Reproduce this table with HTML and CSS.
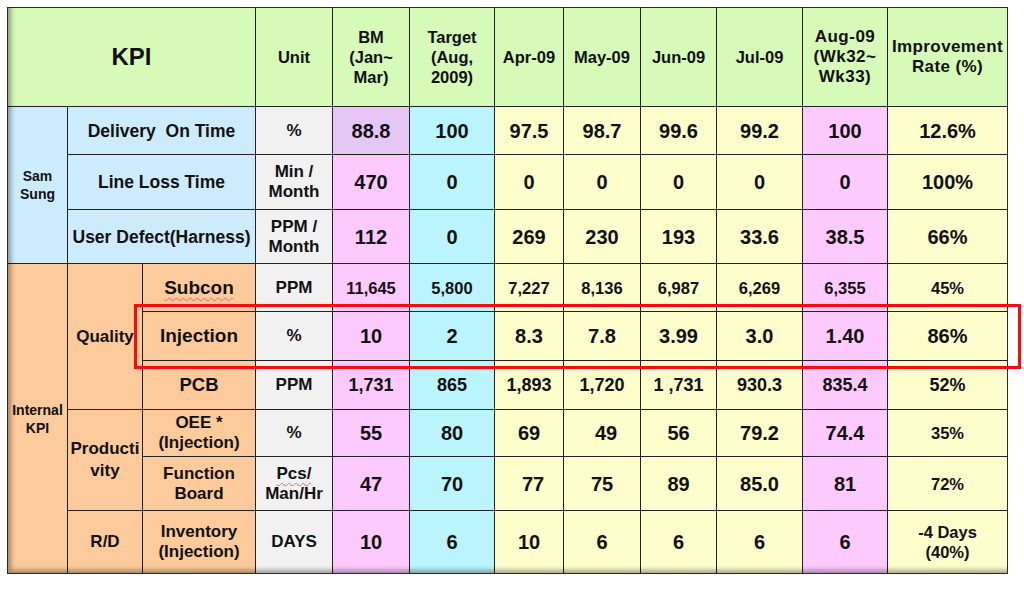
FILE: index.html
```html
<!DOCTYPE html>
<html>
<head>
<meta charset="utf-8">
<link rel="stylesheet" href="styles.css">
</head>
<body>
<div class="slide">
  <div class="kpi">
    <div class="c hd span3 title">KPI</div>
    <div class="c hd">Unit</div>
    <div class="c hd">BM<br>(Jan~<br>Mar)</div>
    <div class="c hd">Target<br>(Aug,<br>2009)</div>
    <div class="c hd">Apr-09</div>
    <div class="c hd">May-09</div>
    <div class="c hd">Jun-09</div>
    <div class="c hd">Jul-09</div>
    <div class="c hd aug">Aug-09<br>(Wk32~<br>Wk33)</div>
    <div class="c hd imp">Improvement<br>Rate (%)</div>

    <div class="c blue grp rows3">Sam<br>Sung</div>
    <div class="c blue span2 lbl">Delivery&nbsp; On Time</div>
    <div class="c unit">%</div>
    <div class="c lav v">88.8</div>
    <div class="c cyan v">100</div>
    <div class="c yel v">97.5</div>
    <div class="c yel v">98.7</div>
    <div class="c yel v">99.6</div>
    <div class="c yel v">99.2</div>
    <div class="c pink v">100</div>
    <div class="c yel v">12.6%</div>

    <div class="c blue span2 lbl">Line Loss Time</div>
    <div class="c unit">Min /<br>Month</div>
    <div class="c pink v">470</div>
    <div class="c cyan v">0</div>
    <div class="c yel v">0</div>
    <div class="c yel v">0</div>
    <div class="c yel v">0</div>
    <div class="c yel v">0</div>
    <div class="c pink v">0</div>
    <div class="c yel v">100%</div>

    <div class="c blue span2 lbl lbl-lg">User Defect(Harness)</div>
    <div class="c unit">PPM /<br>Month</div>
    <div class="c pink v">112</div>
    <div class="c cyan v">0</div>
    <div class="c yel v">269</div>
    <div class="c yel v">230</div>
    <div class="c yel v">193</div>
    <div class="c yel v">33.6</div>
    <div class="c pink v">38.5</div>
    <div class="c yel v">66%</div>

    <div class="c peach grp rows6">Internal<br>KPI</div>
    <div class="c peach sub rows3">Quality</div>
    <div class="c peach name name-lg"><span class="squig">Subcon</span></div>
    <div class="c unit">PPM</div>
    <div class="c pink s">11,645</div>
    <div class="c cyan s">5,800</div>
    <div class="c yel s">7,227</div>
    <div class="c yel s">8,136</div>
    <div class="c yel s">6,987</div>
    <div class="c yel s">6,269</div>
    <div class="c pink s">6,355</div>
    <div class="c yel s">45%</div>

    <div class="c peach name name-lg">Injection</div>
    <div class="c unit">%</div>
    <div class="c pink v">10</div>
    <div class="c cyan v">2</div>
    <div class="c yel v">8.3</div>
    <div class="c yel v">7.8</div>
    <div class="c yel v">3.99</div>
    <div class="c yel v">3.0</div>
    <div class="c pink v">1.40</div>
    <div class="c yel v">86%</div>

    <div class="c peach name name-md">PCB</div>
    <div class="c unit">PPM</div>
    <div class="c pink m">1,731</div>
    <div class="c cyan m">865</div>
    <div class="c yel m">1,893</div>
    <div class="c yel m">1,720</div>
    <div class="c yel m">1 ,731</div>
    <div class="c yel m">930.3</div>
    <div class="c pink m">835.4</div>
    <div class="c yel m">52%</div>

    <div class="c peach sub rows2">Producti<br>vity</div>
    <div class="c peach name">OEE *<br>(Injection)</div>
    <div class="c unit">%</div>
    <div class="c pink v">55</div>
    <div class="c cyan v">80</div>
    <div class="c yel v">69</div>
    <div class="c yel v nudge">49</div>
    <div class="c yel v">56</div>
    <div class="c yel v">79.2</div>
    <div class="c pink v">74.4</div>
    <div class="c yel s">35%</div>

    <div class="c peach name">Function<br>Board</div>
    <div class="c unit"><div class="txt"><span class="squig">Pcs/</span><br>Man/Hr</div></div>
    <div class="c pink v">47</div>
    <div class="c cyan v">70</div>
    <div class="c yel v nudge">77</div>
    <div class="c yel v">75</div>
    <div class="c yel v">89</div>
    <div class="c yel v">85.0</div>
    <div class="c pink v">81</div>
    <div class="c yel s">72%</div>

    <div class="c peach sub">R/D</div>
    <div class="c peach name">Inventory<br>(Injection)</div>
    <div class="c unit">DAYS</div>
    <div class="c pink v">10</div>
    <div class="c cyan v">6</div>
    <div class="c yel v">10</div>
    <div class="c yel v">6</div>
    <div class="c yel v">6</div>
    <div class="c yel v">6</div>
    <div class="c pink v">6</div>
    <div class="c yel s">-4 Days<br>(40%)</div>
  </div>
  <div class="highlight"></div>
</div>
</body>
</html>
```

FILE: styles.css
```css
html, body {
  margin: 0;
  padding: 0;
  background: #ffffff;
}

.slide {
  position: relative;
  width: 1024px;
  height: 590px;
  padding: 7px 0 0 7px;
  box-sizing: border-box;
  font-family: "Liberation Sans", Arial, sans-serif;
  font-weight: bold;
  color: #111;
}

.kpi {
  position: relative;
  display: grid;
  grid-template-columns: 59px 74px 112px 76px 76px 84px 68px 76px 75px 85px 84px 119px;
  grid-template-rows: 98px 47px 54px 53px 47px 48px 48px 46px 53px 62px;
  gap: 1px;
  width: max-content;
  background: #222;
  border: 1px solid #2a2a2a;
}

.kpi::after {
  content: "";
  position: absolute;
  inset: 0;
  pointer-events: none;
  box-shadow: inset 5px -5px 5px -2px rgba(0, 0, 0, 0.35);
}

.c {
  display: flex;
  align-items: center;
  justify-content: center;
  text-align: center;
  line-height: 20px;
  font-size: 17px;
  white-space: nowrap;
}

.txt { text-align: center; }

.span3 { grid-column: span 3; }
.span2 { grid-column: span 2; }
.rows3 { grid-row: span 3; }
.rows2 { grid-row: span 2; }
.rows6 { grid-row: span 6; }

.hd { background: #d6fab8; font-size: 16.5px; }
.title { font-size: 24px; }
.aug { font-size: 17px; letter-spacing: 0.5px; }
.imp { font-size: 17px; letter-spacing: 0.4px; }

.blue { background: #ccecfe; }
.peach { background: #fdcb9b; }
.unit { background: #f1f1f1; font-size: 17px; }
.lav { background: #e6c6f5; }
.pink { background: #fdcafd; }
.cyan { background: #baf4fc; }
.yel { background: #fefdcc; }

.grp { font-size: 14px; line-height: 18px; }
.lbl { font-size: 17.5px; }
.lbl-lg { font-size: 17.5px; }
.sub { font-size: 17px; line-height: 22px; }
.name { font-size: 17px; line-height: 20px; }
.name-lg { font-size: 19px; }
.name-md { font-size: 18.5px; }

.v { font-size: 20px; }
.m { font-size: 18px; }
.s { font-size: 16.5px; }
.nudge { padding-left: 8px; }

.squig {
  text-decoration: underline wavy #e86a6a;
  text-decoration-thickness: 1px;
  text-underline-offset: 3px;
}

.highlight {
  position: absolute;
  left: 134px;
  top: 304px;
  width: 887px;
  height: 65px;
  box-sizing: border-box;
  border: 3px solid #f40d0d;
  pointer-events: none;
}
```
